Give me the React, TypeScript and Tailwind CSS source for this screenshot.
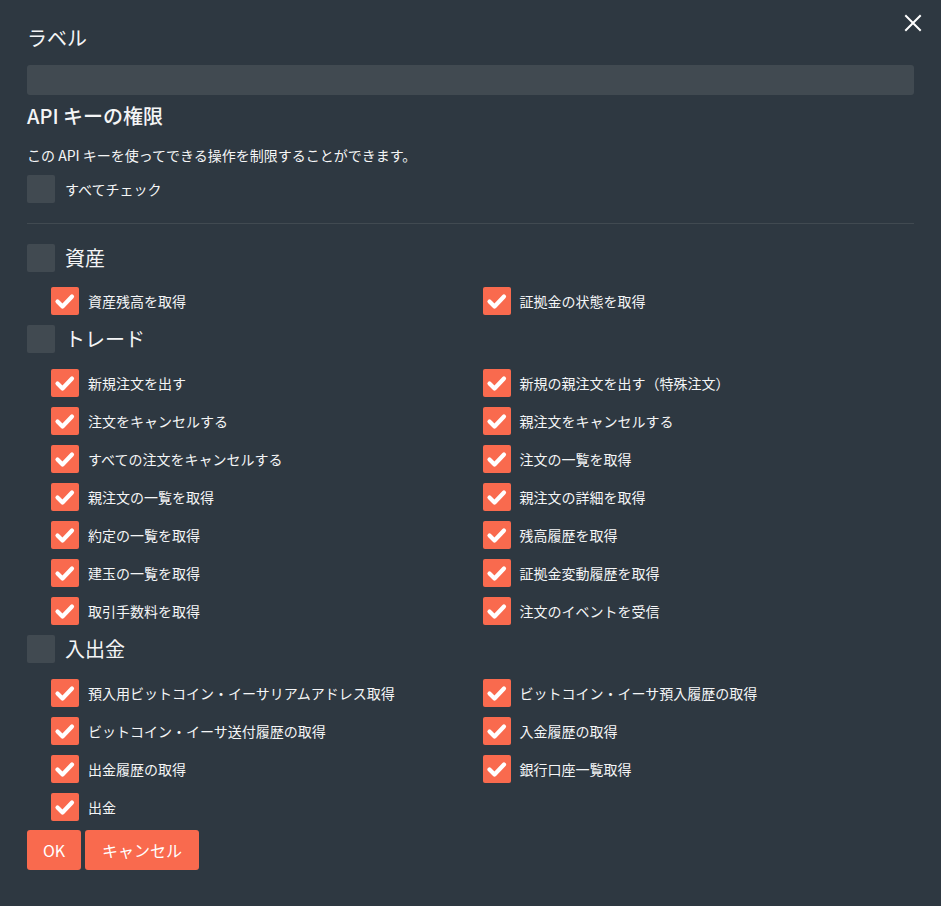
import React from 'react';

const assetItems = ['資産残高を取得', '証拠金の状態を取得'];

const tradeItems = [
  '新規注文を出す',
  '新規の親注文を出す（特殊注文）',
  '注文をキャンセルする',
  '親注文をキャンセルする',
  'すべての注文をキャンセルする',
  '注文の一覧を取得',
  '親注文の一覧を取得',
  '親注文の詳細を取得',
  '約定の一覧を取得',
  '残高履歴を取得',
  '建玉の一覧を取得',
  '証拠金変動履歴を取得',
  '取引手数料を取得',
  '注文のイベントを受信',
];

const fundItems = [
  '預入用ビットコイン・イーサリアムアドレス取得',
  'ビットコイン・イーサ預入履歴の取得',
  'ビットコイン・イーサ送付履歴の取得',
  '入金履歴の取得',
  '出金履歴の取得',
  '銀行口座一覧取得',
  '出金',
];

function Box({ checked }: { checked: boolean }) {
  if (!checked) {
    return <div className="w-[28px] h-[28px] shrink-0 rounded-[2px] bg-[#414a51]" />;
  }
  return (
    <div className="w-[28px] h-[28px] shrink-0 rounded-[2px] bg-[#f96a4e] flex items-center justify-center">
      <svg width="28" height="28" viewBox="0 0 28 28">
        <polyline
          points="6.5,14.5 11.5,19.5 21,9.5"
          fill="none"
          stroke="#ffffff"
          strokeWidth="4.2"
          strokeLinecap="round"
          strokeLinejoin="round"
        />
      </svg>
    </div>
  );
}

function Item({ label }: { label: string }) {
  return (
    <div className="flex items-center gap-[9px] h-[28px]">
      <Box checked />
      <span className="text-[14px] text-[#f4f5f6]">{label}</span>
    </div>
  );
}

function Section({ title, items, first }: { title: string; items: string[]; first?: boolean }) {
  return (
    <div className={first ? 'mt-[20px]' : 'mt-[10px]'}>
      <div className="flex items-center gap-[10px] h-[28px]">
        <Box checked={false} />
        <span className="text-[20px] text-[#f4f5f6]">{title}</span>
      </div>
      <div className={`${first ? 'mt-[15px]' : 'mt-[16px]'} ml-[24px] grid grid-cols-2 gap-y-[10px]`}>
        {items.map((label) => (
          <Item key={label} label={label} />
        ))}
      </div>
    </div>
  );
}

export default function App() {
  return (
    <div
      className="min-h-[906px] bg-[#2e3841] text-white px-[27px] pt-[24px] relative"
      style={{ fontFamily: '"Noto Sans CJK JP", "Noto Sans", sans-serif' }}
    >
      <button className="absolute top-[13px] right-[18px] w-[20px] h-[20px] flex items-center justify-center">
        <svg width="18" height="18" viewBox="0 0 18 18">
          <path d="M2 2 L16 16 M16 2 L2 16" stroke="#ffffff" strokeWidth="2" strokeLinecap="square" />
        </svg>
      </button>

      <h2 className="text-[20px] leading-[28px] text-[#f4f5f6]">ラベル</h2>
      <div className="mt-[13px] h-[30px] rounded-[3px] bg-[#414a51]" />

      <h3 className="mt-[7px] text-[20px] leading-[28px] font-medium text-[#f4f5f6]">API キーの権限</h3>
      <p className="mt-[15px] text-[14px] leading-[20px] text-[#f4f5f6]">
        この API キーを使ってできる操作を制限することができます。
      </p>
      <div className="mt-[10px] flex items-center gap-[10px] h-[28px]">
        <Box checked={false} />
        <span className="text-[14px] text-[#f4f5f6]">すべてチェック</span>
      </div>

      <div className="mt-[20px] h-px bg-[#414a51]" />

      <Section title="資産" items={assetItems} first />
      <Section title="トレード" items={tradeItems} />
      <Section title="入出金" items={fundItems} />

      <div className="mt-[9px] flex gap-[4px]">
        <button className="h-[40px] w-[54px] rounded-[3px] bg-[#f96a4e] text-[16px] text-white">OK</button>
        <button className="h-[40px] w-[114px] rounded-[3px] bg-[#f96a4e] text-[16px] text-white">キャンセル</button>
      </div>
    </div>
  );
}
